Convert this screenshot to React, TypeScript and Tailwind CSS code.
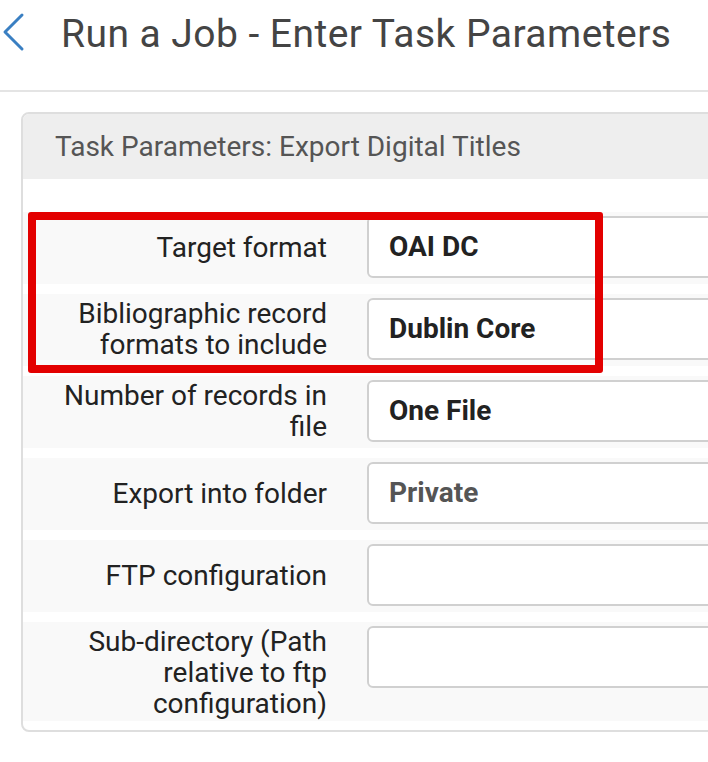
import React from "react";

type Row = { label: string[]; value?: string; muted?: boolean };

const rows: Row[] = [
  { label: ["Target format"], value: "OAI DC" },
  { label: ["Bibliographic record", "formats to include"], value: "Dublin Core" },
  { label: ["Number of records in", "file"], value: "One File" },
  { label: ["Export into folder"], value: "Private", muted: true },
  { label: ["FTP configuration"] },
  { label: ["Sub-directory (Path", "relative to ftp", "configuration)"] },
];

function FieldRow({ row }: { row: Row }) {
  return (
    <div className="flex items-start bg-[#f9f9f9] pt-[4px] pb-[2px]">
      <div className="w-[318px] shrink-0 pr-[14px] min-h-[62px] flex items-center justify-end text-right text-[28px] leading-[31px] text-[#222]">
        <div>
          {row.label.map((l, i) => (
            <div key={i}>{l}</div>
          ))}
        </div>
      </div>
      <div
        className={`ml-[26px] mb-[4px] h-[62px] flex-1 flex items-center rounded-[6px] border-2 border-[#d0d0d0] bg-white pl-[20px] text-[28px] font-bold ${
          row.muted ? "text-[#555]" : "text-[#222]"
        }`}
      >
        {row.value ?? ""}
      </div>
    </div>
  );
}

export default function App() {
  return (
    <div
      className="w-[708px] h-[762px] overflow-hidden bg-white"
      style={{ fontFamily: "Roboto, 'Noto Sans', sans-serif" }}
    >
      <div className="h-[92px] border-b-2 border-[#e4e4e4] flex items-start">
        <svg width="30" height="60" viewBox="0 0 30 60" className="mt-[4px] shrink-0">
          <polyline
            points="22,11 5,28 22,45"
            fill="none"
            stroke="#3a7fc2"
            strokeWidth="3"
            strokeLinecap="round"
            strokeLinejoin="round"
          />
        </svg>
        <div className="ml-[31px] mt-[10px] text-[39px] tracking-[0.45px] leading-[48px] text-[#444] whitespace-nowrap">
          Run a Job - Enter Task Parameters
        </div>
      </div>
      <div className="mt-[20px] ml-[21px] w-[760px] rounded-[8px] border-2 border-[#dedede] overflow-hidden">
        <div className="h-[65px] bg-[#eeeeee] flex items-center pl-[32px] text-[28px] text-[#555]">
          Task Parameters: Export Digital Titles
        </div>
        <div className="relative pt-[33px] pb-[9px] flex flex-col gap-[10px]">
          {rows.map((r, i) => (
            <FieldRow key={i} row={r} />
          ))}
          <div className="absolute left-[5px] top-[33px] w-[575px] h-[161px] border-[8px] border-[#e30000] rounded-[3px] pointer-events-none" />
        </div>
      </div>
    </div>
  );
}
